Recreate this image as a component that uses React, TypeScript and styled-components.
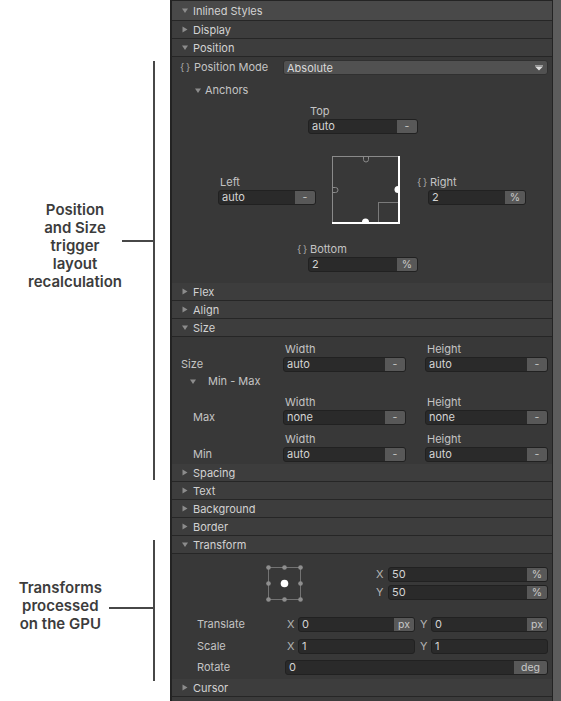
import React from "react";
import styled, { createGlobalStyle } from "styled-components";

const GlobalStyle = createGlobalStyle`
  html, body {
    margin: 0;
    padding: 0;
    background: #ffffff;
  }
  body {
    font-family: Inter, "Noto Sans", sans-serif;
  }
`;

const Page = styled.div`
  display: flex;
  width: 561px;
  height: 701px;
  overflow: hidden;
  background: #ffffff;
`;

/* ---------- side notes ---------- */

const Notes = styled.div`
  width: 170px;
  flex-shrink: 0;
  display: flex;
  flex-direction: column;
  padding-top: 61px;
  box-sizing: border-box;
`;

const Bracket = styled.div<{ $height: number; $top?: number }>`
  width: 155px;
  height: ${(p) => p.$height}px;
  margin-top: ${(p) => p.$top ?? 0}px;
  border-right: 2px solid #474747;
  box-sizing: border-box;
  display: flex;
  justify-content: flex-end;
  align-items: flex-start;
`;

const NoteText = styled.div<{ $top: number; $gap?: number }>`
  margin-top: ${(p) => p.$top}px;
  margin-right: ${(p) => p.$gap ?? 0}px;
  text-align: center;
  font-family: Inter, "Noto Sans", sans-serif;
  font-weight: 600;
  font-size: 15px;
  line-height: 18px;
  color: #3c3c3c;
`;

const Tick = styled.div<{ $top: number; $width: number }>`
  margin-top: ${(p) => p.$top}px;
  width: ${(p) => p.$width}px;
  height: 2px;
  background: #474747;
  flex-shrink: 0;
`;

/* ---------- inspector ---------- */

const Panel = styled.div`
  flex: 1;
  display: flex;
  border-left: 2px solid #232323;
  background: #383838;
`;

const Inspector = styled.div`
  flex: 1;
  display: flex;
  flex-direction: column;
  border-top: 1px solid #242424;
  font-family: Inter, "Noto Sans", sans-serif;
  font-size: 11px;
  color: #c4c4c4;
  min-width: 0;
`;

const Scrollbar = styled.div`
  width: 8px;
  border-left: 1px solid #232323;
  background: #5c5c5c;
`;

const Header = styled.div<{ $main?: boolean }>`
  height: ${(p) => (p.$main ? 19 : 17)}px;
  flex-shrink: 0;
  display: flex;
  align-items: center;
  gap: 5px;
  padding-left: 10px;
  background: ${(p) => (p.$main ? "#494949" : "#3d3d3d")};
  border-bottom: 1px solid #262626;
  color: #d2d2d2;
`;

const Rest = styled.div`
  flex: 1;
  background: #3b3b3b;
`;

const Section = styled.div<{ $pt: number; $pb: number }>`
  display: flex;
  flex-direction: column;
  padding-top: ${(p) => p.$pt}px;
  padding-bottom: ${(p) => p.$pb}px;
  border-bottom: 1px solid #262626;
  margin-bottom: -1px;
`;

const CaretSvg = styled.svg`
  flex-shrink: 0;
  fill: #8c8c8c;
`;

const Caret = ({ open }: { open?: boolean }) => (
  <CaretSvg width="6" height="7" viewBox="0 0 6 7">
    {open ? <polygon points="0,1.5 6,1.5 3,6" /> : <polygon points="0.5,0.5 5.5,3.5 0.5,6.5" />}
  </CaretSvg>
);

const Braces = styled.span`
  font-size: 10px;
  color: #a8a8a8;
  width: 10px;
  flex-shrink: 0;
  white-space: nowrap;
  word-spacing: -1px;
`;

const PropRow = styled.div`
  display: flex;
  align-items: center;
  height: 15px;
  padding: 0 4px 0 8px;
`;

const PropLabel = styled.div<{ $indent?: number }>`
  width: 103px;
  flex-shrink: 0;
  display: flex;
  align-items: center;
  gap: 4px;
  padding-left: ${(p) => p.$indent ?? 0}px;
  box-sizing: border-box;
  line-height: 15px;
`;

const Dropdown = styled.div`
  flex: 1;
  height: 15px;
  box-sizing: border-box;
  display: flex;
  align-items: center;
  justify-content: space-between;
  padding: 0 4px 0 3px;
  background: #515151;
  border: 1px solid #303030;
  border-radius: 3px;
  color: #dadada;
`;

const Foldout = styled.div<{ $indent: number; $gap: number; $top: number }>`
  display: flex;
  align-items: center;
  height: 16px;
  margin-top: ${(p) => p.$top}px;
  padding-left: ${(p) => p.$indent}px;
  gap: ${(p) => p.$gap}px;
  color: #c4c4c4;
`;

const FieldGroup = styled.div<{ $left?: number; $top?: number; $width?: number }>`
  display: flex;
  flex-direction: column;
  margin-left: ${(p) => p.$left ?? 0}px;
  margin-top: ${(p) => p.$top ?? 0}px;
  width: ${(p) => (p.$width ? `${p.$width}px` : "auto")};
  flex: ${(p) => (p.$width ? "none" : "1")};
`;

const FieldLabel = styled.div<{ $hang?: boolean }>`
  display: flex;
  align-items: center;
  gap: 3px;
  height: 14px;
  line-height: 14px;
  margin-bottom: 1px;
  padding-left: 2px;
  margin-left: ${(p) => (p.$hang ? "-13px" : "0")};
`;

const Field = styled.div<{ $width?: number }>`
  display: flex;
  height: 15px;
  width: ${(p) => (p.$width ? `${p.$width}px` : "auto")};
  flex: ${(p) => (p.$width ? "none" : "1")};
  box-sizing: border-box;
  border: 1px solid #212121;
  border-radius: 3px;
  background: #2a2a2a;
  overflow: hidden;
`;

const FieldValue = styled.div`
  flex: 1;
  padding-left: 3px;
  line-height: 13px;
  color: #d4d4d4;
`;

const Unit = styled.div<{ $wide?: boolean }>`
  width: ${(p) => (p.$wide ? 33 : 20)}px;
  flex-shrink: 0;
  background: #585858;
  color: #c8c8c8;
  text-align: center;
  line-height: 13px;
  font-size: 10.5px;
`;

const AnchorRow = styled.div`
  display: flex;
  align-items: center;
  margin-top: 22px;
`;

const AnchorBox = styled.svg`
  margin-left: 16px;
  flex-shrink: 0;
`;

const PairRow = styled.div<{ $top?: number }>`
  display: flex;
  align-items: flex-end;
  margin-top: ${(p) => p.$top ?? 0}px;
  padding: 0 4px 0 8px;
`;

const Pair = styled.div`
  flex: 1;
  display: flex;
  gap: 19px;
`;

const TransformTop = styled.div`
  display: flex;
  align-items: center;
  height: 41px;
  padding: 0 4px 0 92px;
`;

const OriginSvg = styled.svg`
  flex-shrink: 0;
`;

const AxisStack = styled.div`
  margin-left: auto;
  width: 172px;
  display: flex;
  flex-direction: column;
  gap: 3px;
`;

const AxisRow = styled.div`
  display: flex;
  align-items: center;
  height: 15px;
`;

const Axis = styled.div<{ $w: number; $pl: number; $ml?: number }>`
  width: ${(p) => p.$w}px;
  padding-left: ${(p) => p.$pl}px;
  margin-left: ${(p) => p.$ml ?? 0}px;
  box-sizing: border-box;
  flex-shrink: 0;
  color: #b4b4b4;
  line-height: 15px;
`;

const TRow = styled.div<{ $top: number }>`
  display: flex;
  align-items: center;
  height: 15px;
  margin-top: ${(p) => p.$top}px;
  padding: 0 4px 0 25px;
`;

const TLabel = styled.div`
  width: 88px;
  flex-shrink: 0;
  line-height: 15px;
`;

type FieldProps = { value: string; unit?: string; width?: number; wide?: boolean };

const ValueField = ({ value, unit, width, wide }: FieldProps) => (
  <Field $width={width}>
    <FieldValue>{value}</FieldValue>
    {unit && <Unit $wide={wide}>{unit}</Unit>}
  </Field>
);

const Labeled = ({ label, value, unit }: { label: string; value: string; unit: string }) => (
  <FieldGroup>
    <FieldLabel>{label}</FieldLabel>
    <ValueField value={value} unit={unit} />
  </FieldGroup>
);

export default function App() {
  return (
    <>
      <GlobalStyle />
      <Page>
        <Notes>
          <Bracket $height={419}>
            <NoteText $top={140}>
              Position
              <br />
              and Size
              <br />
              trigger
              <br />
              layout
              <br />
              recalculation
            </NoteText>
            <Tick $top={179} $width={31} />
          </Bracket>
          <Bracket $height={141} $top={60}>
            <NoteText $top={39} $gap={7}>
              Transforms
              <br />
              processed
              <br />
              on the GPU
            </NoteText>
            <Tick $top={67} $width={44} />
          </Bracket>
        </Notes>

        <Panel>
          <Inspector>
            <Header $main>
              <Caret open />
              Inlined Styles
            </Header>
            <Header>
              <Caret />
              Display
            </Header>
            <Header>
              <Caret open />
              Position
            </Header>

            <Section $pt={3} $pb={11}>
              <PropRow>
                <PropLabel>
                  <Braces>{"{ }"}</Braces>
                  Position Mode
                </PropLabel>
                <Dropdown>
                  Absolute
                  <svg width="8" height="6" viewBox="0 0 8 6">
                    <rect x="0" y="0" width="8" height="1" fill="#9a9a9a" />
                    <polygon points="0,1.5 8,1.5 4,5.5" fill="#e0e0e0" />
                  </svg>
                </Dropdown>
              </PropRow>

              <Foldout $indent={23} $gap={4} $top={7}>
                <Caret open />
                Anchors
              </Foldout>

              <FieldGroup $left={136} $top={6} $width={110}>
                <FieldLabel>Top</FieldLabel>
                <ValueField value="auto" unit="-" />
              </FieldGroup>

              <AnchorRow>
                <FieldGroup $left={46} $width={98}>
                  <FieldLabel>Left</FieldLabel>
                  <ValueField value="auto" unit="-" />
                </FieldGroup>
                <AnchorBox width="68" height="68" viewBox="0 0 68 68">
                  <line x1="0" y1="0.5" x2="66" y2="0.5" stroke="#8a8a8a" />
                  <line x1="0.5" y1="0" x2="0.5" y2="66" stroke="#8a8a8a" />
                  <line x1="46.5" y1="46" x2="46.5" y2="66" stroke="#7a7a7a" />
                  <line x1="46" y1="46.5" x2="66" y2="46.5" stroke="#7a7a7a" />
                  <path d="M31.5 1 v2.5 a2.5 2.5 0 0 0 5 0 v-2.5" fill="none" stroke="#8a8a8a" />
                  <path d="M1 31.5 h2.5 a2.5 2.5 0 0 1 0 5 h-2.5" fill="none" stroke="#8a8a8a" />
                  <rect x="66" y="0" width="2" height="68" fill="#ffffff" />
                  <rect x="0" y="66" width="68" height="2" fill="#ffffff" />
                  <path d="M66 30 a3.5 3.5 0 0 0 0 7 z" fill="#ffffff" />
                  <path d="M30 66 a3.5 3.5 0 0 1 7 0 z" fill="#ffffff" />
                </AnchorBox>
                <FieldGroup $left={28} $width={98}>
                  <FieldLabel $hang>
                    <Braces>{"{ }"}</Braces>
                    Right
                  </FieldLabel>
                  <ValueField value="2" unit="%" />
                </FieldGroup>
              </AnchorRow>

              <FieldGroup $left={136} $top={18} $width={110}>
                <FieldLabel $hang>
                  <Braces>{"{ }"}</Braces>
                  Bottom
                </FieldLabel>
                <ValueField value="2" unit="%" />
              </FieldGroup>
            </Section>

            <Header>
              <Caret />
              Flex
            </Header>
            <Header>
              <Caret />
              Align
            </Header>
            <Header>
              <Caret open />
              Size
            </Header>

            <Section $pt={5} $pb={2}>
              <PairRow>
                <PropLabel $indent={1}>Size</PropLabel>
                <Pair>
                  <Labeled label="Width" value="auto" unit="-" />
                  <Labeled label="Height" value="auto" unit="-" />
                </Pair>
              </PairRow>
              <Foldout $indent={18} $gap={12} $top={1}>
                <Caret open />
                Min - Max
              </Foldout>
              <PairRow $top={6}>
                <PropLabel $indent={13}>Max</PropLabel>
                <Pair>
                  <Labeled label="Width" value="none" unit="-" />
                  <Labeled label="Height" value="none" unit="-" />
                </Pair>
              </PairRow>
              <PairRow $top={7}>
                <PropLabel $indent={13}>Min</PropLabel>
                <Pair>
                  <Labeled label="Width" value="auto" unit="-" />
                  <Labeled label="Height" value="auto" unit="-" />
                </Pair>
              </PairRow>
            </Section>

            <Header>
              <Caret />
              Spacing
            </Header>
            <Header>
              <Caret />
              Text
            </Header>
            <Header>
              <Caret />
              Background
            </Header>
            <Header>
              <Caret />
              Border
            </Header>
            <Header>
              <Caret open />
              Transform
            </Header>

            <Section $pt={9} $pb={4}>
              <TransformTop>
                <OriginSvg width="41" height="41" viewBox="0 0 41 41">
                  <rect x="4.5" y="4.5" width="32" height="32" fill="none" stroke="#737373" />
                  {[4.5, 20.5, 36.5].map((y) =>
                    [4.5, 20.5, 36.5].map((x) =>
                      x === 20.5 && y === 20.5 ? null : (
                        <circle key={`${x}-${y}`} cx={x} cy={y} r="2.3" fill="#8e8e8e" />
                      )
                    )
                  )}
                  <circle cx="20.5" cy="20.5" r="3.8" fill="#ffffff" />
                </OriginSvg>
                <AxisStack>
                  <AxisRow>
                    <Axis $w={12} $pl={0}>X</Axis>
                    <ValueField value="50" unit="%" />
                  </AxisRow>
                  <AxisRow>
                    <Axis $w={12} $pl={0}>Y</Axis>
                    <ValueField value="50" unit="%" />
                  </AxisRow>
                </AxisStack>
              </TransformTop>

              <TRow $top={13}>
                <TLabel>Translate</TLabel>
                <Axis $w={13} $pl={2}>X</Axis>
                <ValueField value="0" unit="px" />
                <Axis $w={12} $pl={1} $ml={4}>Y</Axis>
                <ValueField value="0" unit="px" />
              </TRow>
              <TRow $top={7}>
                <TLabel>Scale</TLabel>
                <Axis $w={13} $pl={2}>X</Axis>
                <ValueField value="1" />
                <Axis $w={12} $pl={1} $ml={4}>Y</Axis>
                <ValueField value="1" />
              </TRow>
              <TRow $top={6}>
                <TLabel>Rotate</TLabel>
                <ValueField value="0" unit="deg" wide />
              </TRow>
            </Section>

            <Header>
              <Caret />
              Cursor
            </Header>
            <Rest />
          </Inspector>
          <Scrollbar />
        </Panel>
      </Page>
    </>
  );
}
